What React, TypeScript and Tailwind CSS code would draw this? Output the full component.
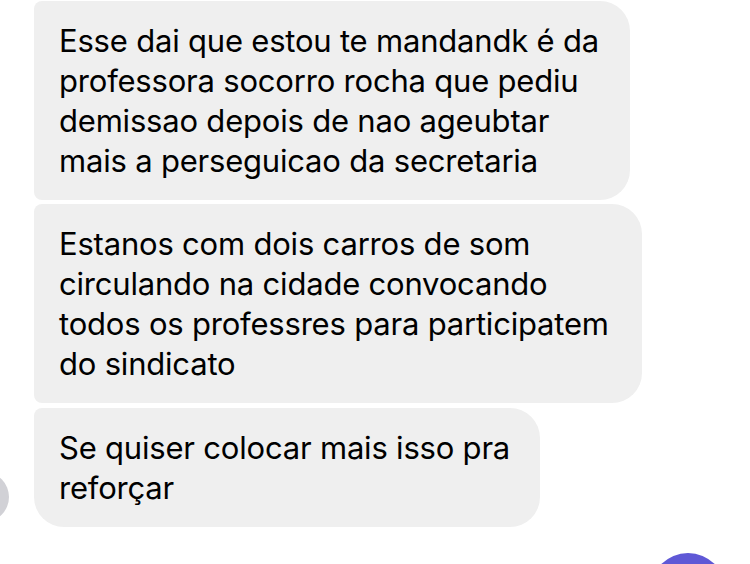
import React from "react";

const font = { fontFamily: "Inter, 'Noto Sans', sans-serif" };

function Bubble({ lines, className }: { lines: string[]; className: string }) {
  return (
    <div className={`bg-[#efefef] text-black pl-[25px] pt-[20px] pb-[19px] ${className}`}>
      {lines.map((l, i) => (
        <div key={i} className="whitespace-nowrap text-[31px] leading-[40px] tracking-[-0.2px]">
          {l}
        </div>
      ))}
    </div>
  );
}

export default function App() {
  return (
    <div className="relative w-[750px] h-[564px] bg-white overflow-hidden" style={font}>
      <div className="flex flex-col gap-[4px] pt-[1px] pl-[34px]">
        <Bubble
          className="w-[596px] rounded-tl-[8px] rounded-bl-[8px] rounded-r-[30px]"
          lines={[
            "Esse dai que estou te mandandk é da",
            "professora socorro rocha que pediu",
            "demissao depois de nao ageubtar",
            "mais a perseguicao da secretaria",
          ]}
        />
        <Bubble
          className="w-[608px] rounded-l-[8px] rounded-r-[30px]"
          lines={[
            "Estanos com dois carros de som",
            "circulando na cidade convocando",
            "todos os professres para participatem",
            "do sindicato",
          ]}
        />
        <div className="mt-[1px]">
          <Bubble
            className="w-[506px] rounded-tl-[8px] rounded-bl-[30px] rounded-r-[30px]"
            lines={["Se quiser colocar mais isso pra", "reforçar"]}
          />
        </div>
      </div>
      <div className="absolute left-[-41px] top-[472px] w-[50px] h-[50px] rounded-full bg-[#d1d1d6]" />
      <div className="absolute left-[650px] top-[553px] w-[76px] h-[76px] rounded-full bg-[#5f58d6]" />
    </div>
  );
}
